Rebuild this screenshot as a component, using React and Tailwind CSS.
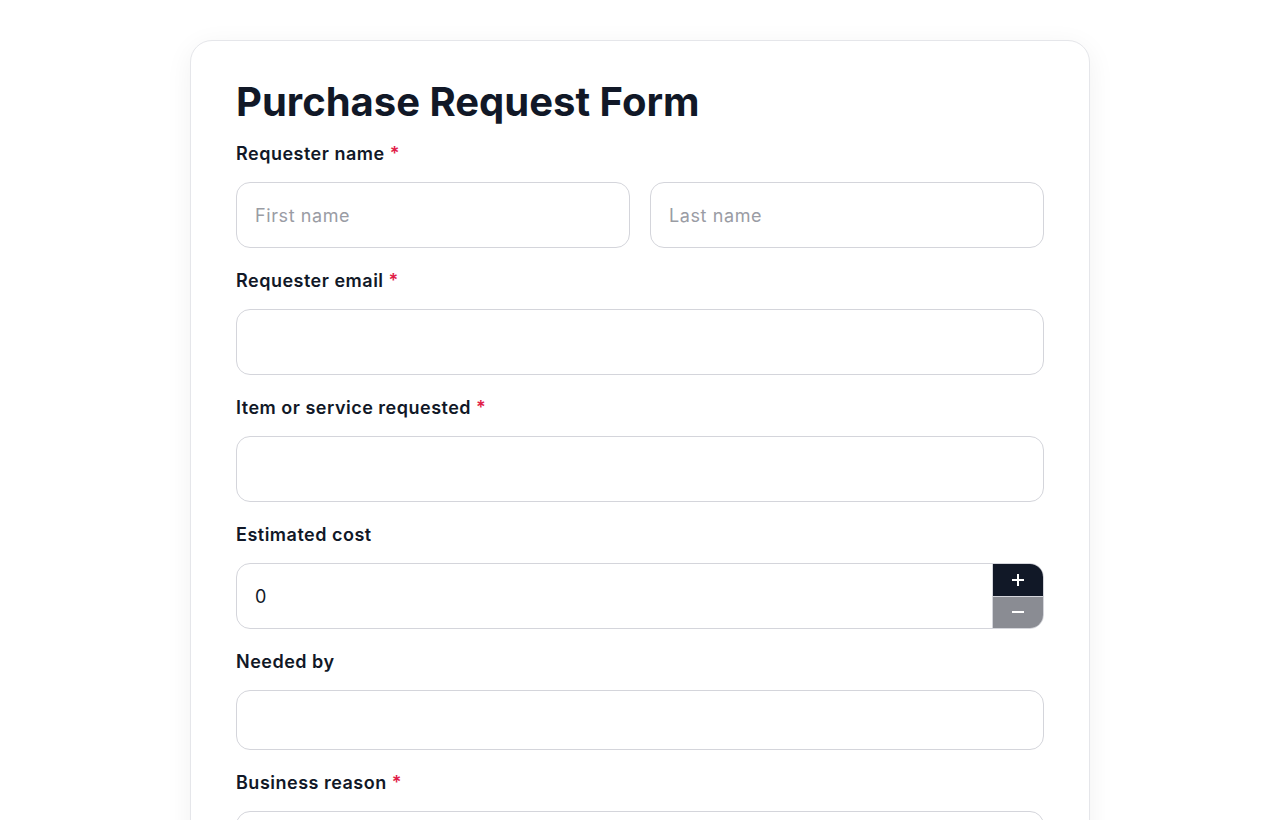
import { useState } from "react";

function Label({ children, required }) {
    return (
        <label className="block h-[28px] leading-[28px] mb-[14px] text-[18px] font-semibold text-[#111827] tracking-[0.5px]">
            {children}
            {required && <span className="text-[#e11d48] ml-[5px]">*</span>}
        </label>
    );
}

function TextBox({ placeholder, tall = true }) {
    return (
        <input
            placeholder={placeholder}
            className={`w-full ${tall ? "h-[66px]" : "h-[60px]"} border border-[#d4d5db] rounded-[14px] px-[18px] text-[18px] tracking-[0.6px] text-[#111827] placeholder:text-[#9a9ca4] outline-none bg-white`}
        />
    );
}

export default function App() {
    const [cost, setCost] = useState(0);

    return (
        <div
            className="min-h-screen bg-white flex justify-center pt-[40px]"
            style={{ fontFamily: "Inter, 'Noto Sans', sans-serif" }}
        >
            <div className="w-[900px] border border-[#e5e6ea] rounded-[22px] bg-white shadow-[0_6px_28px_rgba(17,24,39,0.06)] px-[45px] pt-[37px] pb-[40px] h-fit">
                <h1 className="text-[40px] leading-[48px] font-bold text-[#111827] tracking-[0px] mb-[14px]">
                    Purchase Request Form
                </h1>

                {/* ── Requester name ── */}
                <Label required>Requester name</Label>
                <div className="grid grid-cols-2 gap-[20px] mb-[19px]">
                    <TextBox placeholder="First name" />
                    <TextBox placeholder="Last name" />
                </div>

                <Label required>Requester email</Label>
                <div className="mb-[19px]">
                    <TextBox />
                </div>

                <Label required>Item or service requested</Label>
                <div className="mb-[19px]">
                    <TextBox />
                </div>

                {/* ── Estimated cost with stepper ── */}
                <Label>Estimated cost</Label>
                <div className="flex h-[66px] border border-[#d4d5db] rounded-[14px] overflow-hidden mb-[19px]">
                    <input
                        value={cost}
                        onChange={(e) => setCost(e.target.value)}
                        className="flex-1 min-w-0 px-[18px] text-[18px] text-[#111827] outline-none"
                    />
                    <div className="w-[51px] flex flex-col border-l border-[#d4d5db]">
                        <button
                            onClick={() => setCost(Number(cost) + 1)}
                            className="flex-1 bg-[#111827] text-white flex items-center justify-center border-b border-[#d4d5db]"
                        >
                            <svg width="14" height="14" viewBox="0 0 14 14">
                                <path d="M7 1v12M1 7h12" stroke="white" strokeWidth="2" />
                            </svg>
                        </button>
                        <button
                            onClick={() => setCost(Number(cost) - 1)}
                            className="flex-1 bg-[#8a8c93] text-white flex items-center justify-center"
                        >
                            <svg width="12" height="14" viewBox="0 0 12 14">
                                <path d="M0 7h12" stroke="white" strokeWidth="2" />
                            </svg>
                        </button>
                    </div>
                </div>

                <Label>Needed by</Label>
                <div className="mb-[19px]">
                    <TextBox tall={false} />
                </div>

                <Label required>Business reason</Label>
                <textarea className="w-full h-[140px] border border-[#d4d5db] rounded-[14px] px-[18px] py-[16px] text-[18px] outline-none resize-none" />
            </div>
        </div>
    );
}
